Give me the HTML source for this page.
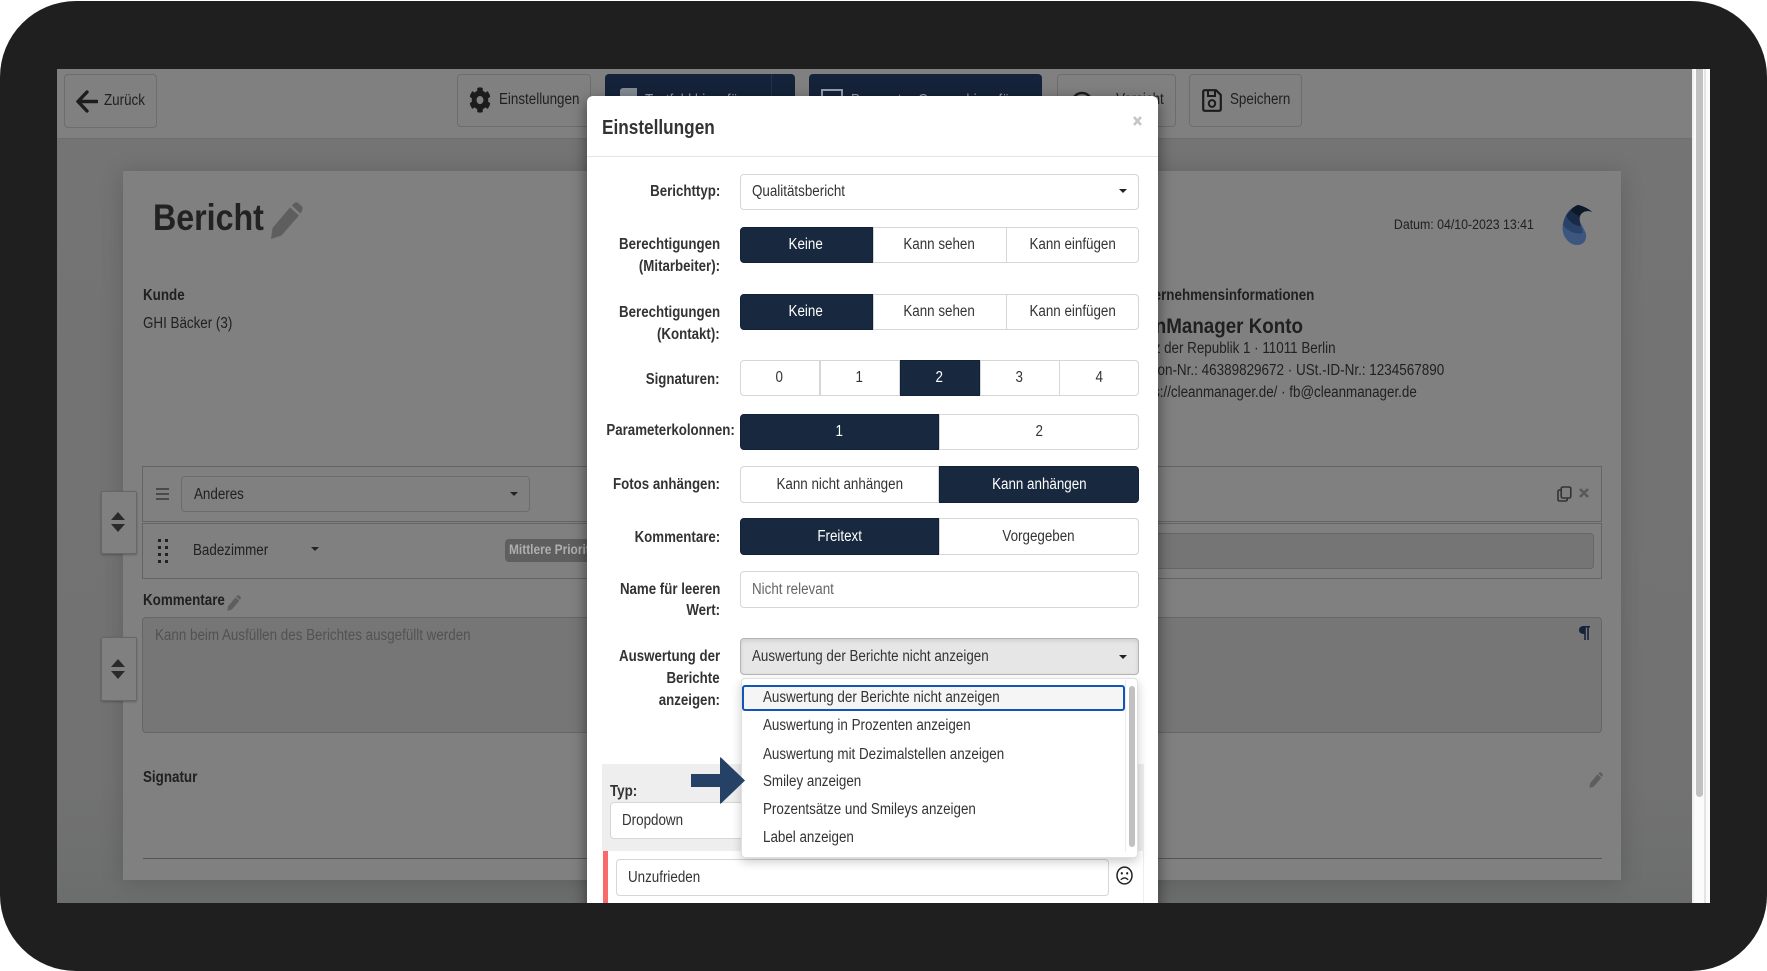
<!DOCTYPE html>
<html lang="de">
<head>
<meta charset="utf-8">
<title>Einstellungen</title>
<style>
html,body{margin:0;padding:0;width:1767px;height:971px;overflow:hidden;background:#fff}
body{font-family:"Liberation Sans",sans-serif;font-size:15.4px;color:#333}
.frame{position:absolute;left:0;top:1px;width:1767px;height:970px;background:#201f20;border-radius:76px}
.screen{position:absolute;left:0;top:0;width:1767px;height:971px;clip-path:inset(69px 57px 68px 57px)}
.abs{position:absolute;box-sizing:border-box}
.t{position:absolute;white-space:nowrap;line-height:20px;margin-top:1px;transform:scaleX(.87);transform-origin:left center}
.r{transform-origin:right center}
.l{font-weight:bold;color:#333;right:1047px;transform:scaleX(.863)}
.d{color:#202020}
.db{color:#202020;font-weight:bold}
.tb{position:absolute;box-sizing:border-box;top:74px;height:54px;border:1px solid #6d6d6d;border-radius:4px;background:#808080}
.dk{position:absolute;box-sizing:border-box;top:74px;height:54px;background:#15233a;border-radius:4px}
.b{position:absolute;box-sizing:border-box;background:#fff;border:1px solid #d6d6d6;display:flex;align-items:center;justify-content:center;color:#333}
.b span{display:inline-block;transform:scaleX(.87);white-space:nowrap}
.s span{margin-left:-2px}
.a{background:#18283f;border-color:#12213a;color:#fff}
.f{position:absolute;box-sizing:border-box;background:#fff;border:1px solid #d6d6d6;border-radius:4px}
.car{position:absolute;width:0;height:0;border-left:4px solid transparent;border-right:4px solid transparent;border-top:4px solid #222}
.up{position:absolute;width:0;height:0;border-left:7px solid transparent;border-right:7px solid transparent;border-bottom:8px solid #2a2a2a}
.dn{position:absolute;width:0;height:0;border-left:7px solid transparent;border-right:7px solid transparent;border-top:8px solid #2a2a2a}
.sw{position:absolute;box-sizing:border-box;left:101px;width:36px;background:#808080;border:1px solid #676767;border-radius:2px;box-shadow:0 1px 2px rgba(0,0,0,.25)}
svg{position:absolute;display:block}
</style>
</head>
<body>
<div class="frame"></div>
<div class="screen">
  <!-- page background -->
  <div class="abs" style="left:57px;top:69px;width:1635px;height:834px;background:linear-gradient(#747474,#727272 85%,#6c6e6d)"></div>
  <!-- right strip + scrollbar -->
  <div class="abs" style="left:1692px;top:69px;width:18px;height:834px;background:#fbfbfb"></div>
  <div class="abs" style="left:1692px;top:69px;width:2px;height:834px;background:#f0f0f0"></div>
  <div class="abs" style="left:1696px;top:69px;width:7px;height:728px;background:#c1c1c1;border-radius:0 0 4px 4px"></div>
  <div class="abs" style="left:1704px;top:69px;width:2px;height:834px;background:#e4e4e4"></div>

  <!-- toolbar -->
  <div class="abs" style="left:57px;top:69px;width:1635px;height:70px;background:#808080;border-bottom:1px solid #6e6e6e"></div>
  <div class="tb" style="left:64px;width:93px"></div>
  <svg style="left:76px;top:90px" width="22" height="23" viewBox="0 0 22 23"><path d="M11 2 L2 11.5 L11 21 M2 11.5 H21" fill="none" stroke="#1c1c1c" stroke-width="3.4" stroke-linecap="round" stroke-linejoin="round"/></svg>
  <span class="t d" style="left:104px;top:90px">Zurück</span>

  <div class="tb" style="left:457px;width:134px;height:53px"></div>
  <svg style="left:469px;top:87px" width="22" height="26" viewBox="0 0 512 512" preserveAspectRatio="none"><path fill="#1c1c1c" d="M487.4 315.7l-42.6-24.6c4.3-23.2 4.3-47 0-70.2l42.6-24.6c4.9-2.8 7.1-8.6 5.5-14-11.1-35.6-30-67.8-54.7-94.6-3.8-4.1-10-5.1-14.8-2.3L380.8 110c-17.9-15.4-38.5-27.3-60.8-35.1V25.8c0-5.6-3.9-10.5-9.4-11.7-36.7-8.2-74.3-7.8-109.2 0-5.5 1.2-9.4 6.1-9.4 11.7V75c-22.2 7.9-42.8 19.8-60.8 35.1L88.7 85.5c-4.9-2.8-11-1.9-14.8 2.3-24.7 26.7-43.6 58.9-54.7 94.6-1.7 5.4.6 11.2 5.5 14L67.3 221c-4.3 23.2-4.3 47 0 70.2l-42.6 24.6c-4.9 2.8-7.1 8.6-5.5 14 11.1 35.6 30 67.8 54.7 94.6 3.8 4.1 10 5.1 14.8 2.3l42.6-24.6c17.9 15.4 38.5 27.3 60.8 35.1v49.2c0 5.6 3.9 10.5 9.4 11.7 36.7 8.2 74.3 7.8 109.2 0 5.5-1.2 9.4-6.1 9.4-11.7v-49.2c22.2-7.9 42.8-19.8 60.8-35.1l42.6 24.6c4.9 2.8 11 1.9 14.8-2.3 24.7-26.7 43.6-58.9 54.7-94.6 1.5-5.5-.7-11.3-5.6-14.1zM256 336c-44.1 0-80-35.9-80-80s35.9-80 80-80 80 35.9 80 80-35.9 80-80 80z"/></svg>
  <span class="t d" style="left:499px;top:89px">Einstellungen</span>

  <div class="dk" style="left:605px;width:190px"></div>
  <div class="abs" style="left:771px;top:74px;width:1px;height:54px;background:#22324c"></div>
  <div class="abs" style="left:620px;top:88px;width:17px;height:10px;background:#858b94;border-radius:3px 0 0 0"></div>
  <span class="t" style="left:645px;top:90px;color:#9a9fa7">Textfeld hinzufügen</span>
  <div class="dk" style="left:809px;width:233px"></div>
  <div class="abs" style="left:821px;top:89px;width:22px;height:12px;border:2px solid #9a9fa7"></div>
  <span class="t" style="left:851px;top:90px;color:#9a9fa7">Parameter-Gruppe hinzufügen</span>
  <div class="tb" style="left:1057px;width:119px;height:53px"></div>
  <svg style="left:1070px;top:91px" width="24" height="24" viewBox="0 0 24 24"><circle cx="12" cy="12" r="10" fill="none" stroke="#1c1c1c" stroke-width="2.4"/></svg>
  <span class="t r d" style="right:603px;top:89px">Vorsicht</span>
  <div class="tb" style="left:1189px;width:113px;height:53px"></div>
  <svg style="left:1202px;top:89px" width="20" height="23" viewBox="0 0 20 23"><path d="M3 1.2 H14 L18.8 6 V20 Q18.8 21.8 17 21.8 H3 Q1.2 21.8 1.2 20 V3 Q1.2 1.2 3 1.2Z" fill="none" stroke="#1c1c1c" stroke-width="2.2"/><path d="M6 1.5 V7 H13 V1.5" fill="none" stroke="#1c1c1c" stroke-width="2"/><ellipse cx="10" cy="14.5" rx="3.2" ry="3.4" fill="none" stroke="#1c1c1c" stroke-width="2"/></svg>
  <span class="t d" style="left:1230px;top:89px">Speichern</span>

  <!-- paper -->
  <div class="abs" style="left:123px;top:171px;width:1498px;height:709px;background:#808080;box-shadow:0 2px 22px rgba(0,0,0,.16)"></div>
  <span class="t" style="left:153px;top:197px;line-height:40px;font-size:37px;font-weight:bold;color:#222;transform:scaleX(.87)">Bericht</span>
  <svg style="left:270px;top:202px" width="33" height="37" viewBox="0 0 33 37" preserveAspectRatio="none"><path fill="#5e5e5e" d="M2.5 26 L20 5.5 L29 13.5 L11.5 33.5 L1 37 Z"/><path fill="#5e5e5e" d="M22 3.6 L24 1.2 Q26 -.6 28.2 1 L31.5 4 Q33.6 6.2 32 8.6 L30.5 11.6 Z"/></svg>
  <span class="t db" style="left:143px;top:285px">Kunde</span>
  <span class="t d" style="left:143px;top:313px">GHI Bäcker (3)</span>

  <span class="t r d" style="right:233px;top:214px;font-size:14.2px">Datum: 04/10-2023 13:41</span>
  <svg style="left:1561px;top:205px" width="32" height="41" viewBox="0 0 32 41">
    <path fill="#3d5680" d="M17 0 C22 1 28 4 31 7 C27 5 21 6 19 11 C17 17 23 22 25 29 C26 36 22 40 16 40 C9 40 3 33 2 27 C0 18 5 4 17 0Z"/>
    <path fill="#2a4268" d="M17 0 C22 1 28 4 31 7 C27 5 21 6 19 11 C17 17 21 22 22 28 C15 30 6 26 2.2 20 C3 12 8 3 17 0Z"/>
    <path fill="#182a46" d="M17 0 C22 1 28 4 31 7 C27 5 21 6 19 11 C18 15 19 18 20 21 C14 21 8 17 5.5 11 C8 6 12 2 17 0Z"/>
    <path fill="#0d1829" d="M17 0 C22 1 28 4 31 7 C27 5 21 6 19 11 C15 10 12 8 10 5 C12 3 14 1 17 0Z"/>
  </svg>
  <span class="t r db" style="right:453px;top:285px">Unternehmensinformationen</span>
  <span class="t r db" style="right:464px;top:315px;font-size:21.6px">CleanManager Konto</span>
  <span class="t r d" style="right:431px;top:338px">Platz der Republik 1 · 11011 Berlin</span>
  <span class="t r d" style="right:323px;top:360px;transform:scaleX(.875)">Telefon-Nr.: 46389829672 · USt.-ID-Nr.: 1234567890</span>
  <span class="t r d" style="right:350px;top:382px">https://cleanmanager.de/ · fb@cleanmanager.de</span>

  <!-- section rows -->
  <div class="abs" style="left:142px;top:466px;width:1460px;height:56px;border:1px solid #646464"></div>
  <div class="abs" style="left:142px;top:523px;width:1460px;height:56px;border:1px solid #646464"></div>
  <div class="abs" style="left:181px;top:476px;width:349px;height:36px;border:1px solid #6c6c6c;border-radius:4px"></div>
  <span class="t d" style="left:194px;top:484px">Anderes</span>
  <div class="car" style="left:510px;top:492px;border-top-color:#222"></div>
  <div class="abs" style="left:156px;top:488px;width:13px;height:2px;background:#4a4a4a"></div>
  <div class="abs" style="left:156px;top:493px;width:13px;height:2px;background:#4a4a4a"></div>
  <div class="abs" style="left:156px;top:498px;width:13px;height:2px;background:#4a4a4a"></div>
  <svg style="left:158px;top:539px" width="10" height="24" viewBox="0 0 10 24" fill="#222"><rect x="0" y="0" width="3" height="3"/><rect x="7" y="0" width="3" height="3"/><rect x="0" y="7" width="3" height="3"/><rect x="7" y="7" width="3" height="3"/><rect x="0" y="14" width="3" height="3"/><rect x="7" y="14" width="3" height="3"/><rect x="0" y="21" width="3" height="3"/><rect x="7" y="21" width="3" height="3"/></svg>
  <span class="t d" style="left:193px;top:540px">Badezimmer</span>
  <div class="car" style="left:311px;top:547px;border-top-color:#222"></div>
  <div class="abs" style="left:505px;top:539px;width:140px;height:23px;background:#5f5f5f;border-radius:4px"></div>
  <span class="t" style="left:509px;top:538px;font-size:13.7px;line-height:21px;font-weight:bold;color:#aeaeae">Mittlere Priorität</span>
  <div class="abs" style="left:640px;top:533px;width:954px;height:36px;background:#757575;border:1px solid #666;border-radius:4px"></div>
  <svg style="left:1557px;top:486px" width="15" height="16" viewBox="0 0 15 16"><rect x="4.2" y="1" width="9.6" height="11" rx="1.6" fill="none" stroke="#333" stroke-width="1.6"/><path d="M4 4 H2.6 Q1 4 1 5.6 V13.4 Q1 15 2.6 15 H8.6 Q10.2 15 10.2 13.4 V12.4" fill="none" stroke="#333" stroke-width="1.6"/></svg>
  <svg style="left:1579px;top:488px" width="10" height="10" viewBox="0 0 10 10"><path d="M1 1 L9 9 M9 1 L1 9" stroke="#595959" stroke-width="2.6"/></svg>

  <span class="t db" style="left:143px;top:590px">Kommentare</span>
  <svg style="left:227px;top:595px" width="14" height="16" viewBox="0 0 33 37" preserveAspectRatio="none"><path fill="#5e5e5e" d="M2.5 26 L20 5.5 L29 13.5 L11.5 33.5 L1 37 Z"/><path fill="#5e5e5e" d="M22 3.6 L24 1.2 Q26 -.6 28.2 1 L31.5 4 Q33.6 6.2 32 8.6 L30.5 11.6 Z"/></svg>
  <div class="abs" style="left:142px;top:617px;width:1460px;height:116px;background:#767676;border:1px solid #666;border-radius:4px"></div>
  <span class="t" style="left:155px;top:625px;color:#525252">Kann beim Ausfüllen des Berichtes ausgefüllt werden</span>
  <svg style="left:1579px;top:626px" width="11" height="14" viewBox="0 0 11 14"><path fill="#15233a" d="M4.5 0 H11 V1.5 H9.8 V14 H8.2 V1.5 H6.8 V14 H5.2 V8 C2 8 0 6.5 0 4 C0 1.5 2 0 4.5 0Z"/></svg>

  <div class="sw" style="top:491px;height:63px"></div>
  <div class="up" style="left:111px;top:512px"></div>
  <div class="dn" style="left:111px;top:524px"></div>
  <div class="sw" style="top:637px;height:64px"></div>
  <div class="up" style="left:111px;top:659px"></div>
  <div class="dn" style="left:111px;top:671px"></div>

  <span class="t db" style="left:143px;top:767px">Signatur</span>
  <svg style="left:1589px;top:772px" width="14" height="16" viewBox="0 0 33 37" preserveAspectRatio="none"><path fill="#5e5e5e" d="M2.5 26 L20 5.5 L29 13.5 L11.5 33.5 L1 37 Z"/><path fill="#5e5e5e" d="M22 3.6 L24 1.2 Q26 -.6 28.2 1 L31.5 4 Q33.6 6.2 32 8.6 L30.5 11.6 Z"/></svg>
  <div class="abs" style="left:143px;top:858px;width:1459px;height:1px;background:#565656"></div>

  <!-- modal -->
  <div class="abs" style="left:587px;top:96px;width:571px;height:830px;background:#fff;border-radius:6px 6px 0 0;box-shadow:0 5px 15px rgba(0,0,0,.5)"></div>
  <div class="abs" style="left:587px;top:156px;width:571px;height:1px;background:#e5e5e5"></div>
  <span class="t" style="left:602px;top:115px;line-height:24px;font-size:20px;font-weight:bold;color:#333;transform:scaleX(.86)">Einstellungen</span>
  <svg style="left:1133px;top:116px" width="9" height="10" viewBox="0 0 9 10"><path d="M1 1 L8 9 M8 1 L1 9" stroke="#c6c6c6" stroke-width="2.6"/></svg>

  <span class="t r l" style="top:181px">Berichttyp:</span>
  <div class="f" style="left:740px;top:174px;width:399px;height:36px"></div>
  <span class="t" style="left:752px;top:181px">Qualitätsbericht</span>
  <div class="car" style="left:1119px;top:189px"></div>

  <span class="t r l" style="top:234px">Berechtigungen</span>
  <span class="t r l" style="top:256px">(Mitarbeiter):</span>
  <div class="b a s" style="left:740px;top:227px;width:133px;height:36px;border-radius:4px 0 0 4px"><span>Keine</span></div>
  <div class="b s" style="left:873px;top:227px;width:134px;height:36px"><span>Kann sehen</span></div>
  <div class="b" style="left:1006px;top:227px;width:133px;height:36px;border-radius:0 4px 4px 0"><span>Kann einfügen</span></div>

  <span class="t r l" style="top:302px">Berechtigungen</span>
  <span class="t r l" style="top:324px">(Kontakt):</span>
  <div class="b a s" style="left:740px;top:294px;width:133px;height:36px;border-radius:4px 0 0 4px"><span>Keine</span></div>
  <div class="b s" style="left:873px;top:294px;width:134px;height:36px"><span>Kann sehen</span></div>
  <div class="b" style="left:1006px;top:294px;width:133px;height:36px;border-radius:0 4px 4px 0"><span>Kann einfügen</span></div>

  <span class="t r l" style="top:369px">Signaturen:</span>
  <div class="b s" style="left:740px;top:360px;width:80px;height:36px;border-radius:4px 0 0 4px"><span>0</span></div>
  <div class="b s" style="left:820px;top:360px;width:80px;height:36px"><span>1</span></div>
  <div class="b a s" style="left:900px;top:360px;width:80px;height:36px"><span>2</span></div>
  <div class="b s" style="left:980px;top:360px;width:80px;height:36px"><span>3</span></div>
  <div class="b" style="left:1059px;top:360px;width:80px;height:36px;border-radius:0 4px 4px 0"><span>4</span></div>

  <span class="t r" style="right:1032px;top:420px;font-weight:bold;color:#333;transform:scaleX(.863)">Parameterkolonnen:</span>
  <div class="b a" style="left:740px;top:414px;width:199px;height:36px;border-radius:4px 0 0 4px"><span>1</span></div>
  <div class="b" style="left:939px;top:414px;width:200px;height:36px;border-radius:0 4px 4px 0"><span>2</span></div>

  <span class="t r l" style="top:474px">Fotos anhängen:</span>
  <div class="b" style="left:740px;top:466px;width:199px;height:37px;border-radius:4px 0 0 4px"><span>Kann nicht anhängen</span></div>
  <div class="b a" style="left:939px;top:466px;width:200px;height:37px;border-radius:0 4px 4px 0"><span>Kann anhängen</span></div>

  <span class="t r l" style="top:527px">Kommentare:</span>
  <div class="b a" style="left:740px;top:518px;width:199px;height:37px;border-radius:4px 0 0 4px"><span>Freitext</span></div>
  <div class="b" style="left:939px;top:518px;width:200px;height:37px;border-radius:0 4px 4px 0"><span>Vorgegeben</span></div>

  <span class="t r l" style="top:579px">Name für leeren</span>
  <span class="t r l" style="top:600px">Wert:</span>
  <div class="f" style="left:740px;top:571px;width:399px;height:37px"></div>
  <span class="t" style="left:752px;top:579px;color:#666">Nicht relevant</span>

  <span class="t r l" style="top:646px">Auswertung der</span>
  <span class="t r l" style="top:668px">Berichte</span>
  <span class="t r l" style="top:690px">anzeigen:</span>
  <div class="f" style="left:740px;top:638px;width:399px;height:37px;background:#e6e6e6;border-color:#b4b4b4;box-shadow:inset 0 2px 4px rgba(0,0,0,.1)"></div>
  <span class="t" style="left:752px;top:646px">Auswertung der Berichte nicht anzeigen</span>
  <div class="car" style="left:1119px;top:655px"></div>

  <!-- lower panel -->
  <div class="abs" style="left:602px;top:764px;width:542px;height:87px;background:#eee"></div>
  <div class="abs" style="left:1143px;top:851px;width:1px;height:60px;background:#eee"></div>
  <span class="t" style="left:610px;top:781px;font-weight:bold;color:#333">Typ:</span>
  <div class="f" style="left:610px;top:802px;width:400px;height:37px"></div>
  <span class="t" style="left:622px;top:810px">Dropdown</span>
  <div class="abs" style="left:603px;top:851px;width:5px;height:60px;background:#f96b6b"></div>
  <div class="f" style="left:616px;top:859px;width:493px;height:37px"></div>
  <span class="t" style="left:628px;top:867px">Unzufrieden</span>
  <svg style="left:1116px;top:866px" width="17" height="19" viewBox="0 0 17 19"><ellipse cx="8.5" cy="9.5" rx="7.5" ry="8.4" fill="none" stroke="#222" stroke-width="1.5"/><ellipse cx="5.8" cy="7.3" rx="1.1" ry="1.3" fill="#222"/><ellipse cx="11.2" cy="7.3" rx="1.1" ry="1.3" fill="#222"/><path d="M4.8 13.8 Q8.5 10 12.2 13.8" fill="none" stroke="#222" stroke-width="1.4"/></svg>

  <!-- dropdown menu -->
  <div class="abs" style="left:741px;top:678px;width:397px;height:180px;background:#fff;border:1px solid #e0e0e0;border-radius:4px;box-shadow:0 4px 10px rgba(0,0,0,.2)"></div>
  <div class="abs" style="left:742px;top:685px;width:383px;height:26px;background:#f5f5f5;border:2px solid #0f56b8;border-radius:3px"></div>
  <span class="t" style="left:763px;top:687px">Auswertung der Berichte nicht anzeigen</span>
  <span class="t" style="left:763px;top:715px">Auswertung in Prozenten anzeigen</span>
  <span class="t" style="left:763px;top:744px">Auswertung mit Dezimalstellen anzeigen</span>
  <span class="t" style="left:763px;top:771px">Smiley anzeigen</span>
  <span class="t" style="left:763px;top:799px">Prozentsätze und Smileys anzeigen</span>
  <span class="t" style="left:763px;top:827px">Label anzeigen</span>
  <div class="abs" style="left:1125px;top:680px;width:1px;height:172px;background:#ececec"></div>
  <div class="abs" style="left:1129px;top:686px;width:6px;height:161px;background:#c1c1c1;border-radius:3px"></div>

  <!-- arrow -->
  <svg style="left:690px;top:756px" width="56" height="49" viewBox="0 0 56 49"><path fill="#264166" d="M1 18 H30 V2 Q30 .5 31.5 2 L55 24.5 L31.5 47 Q30 48.5 30 47 V31 H1 Z"/></svg>
</div>
</body>
</html>
